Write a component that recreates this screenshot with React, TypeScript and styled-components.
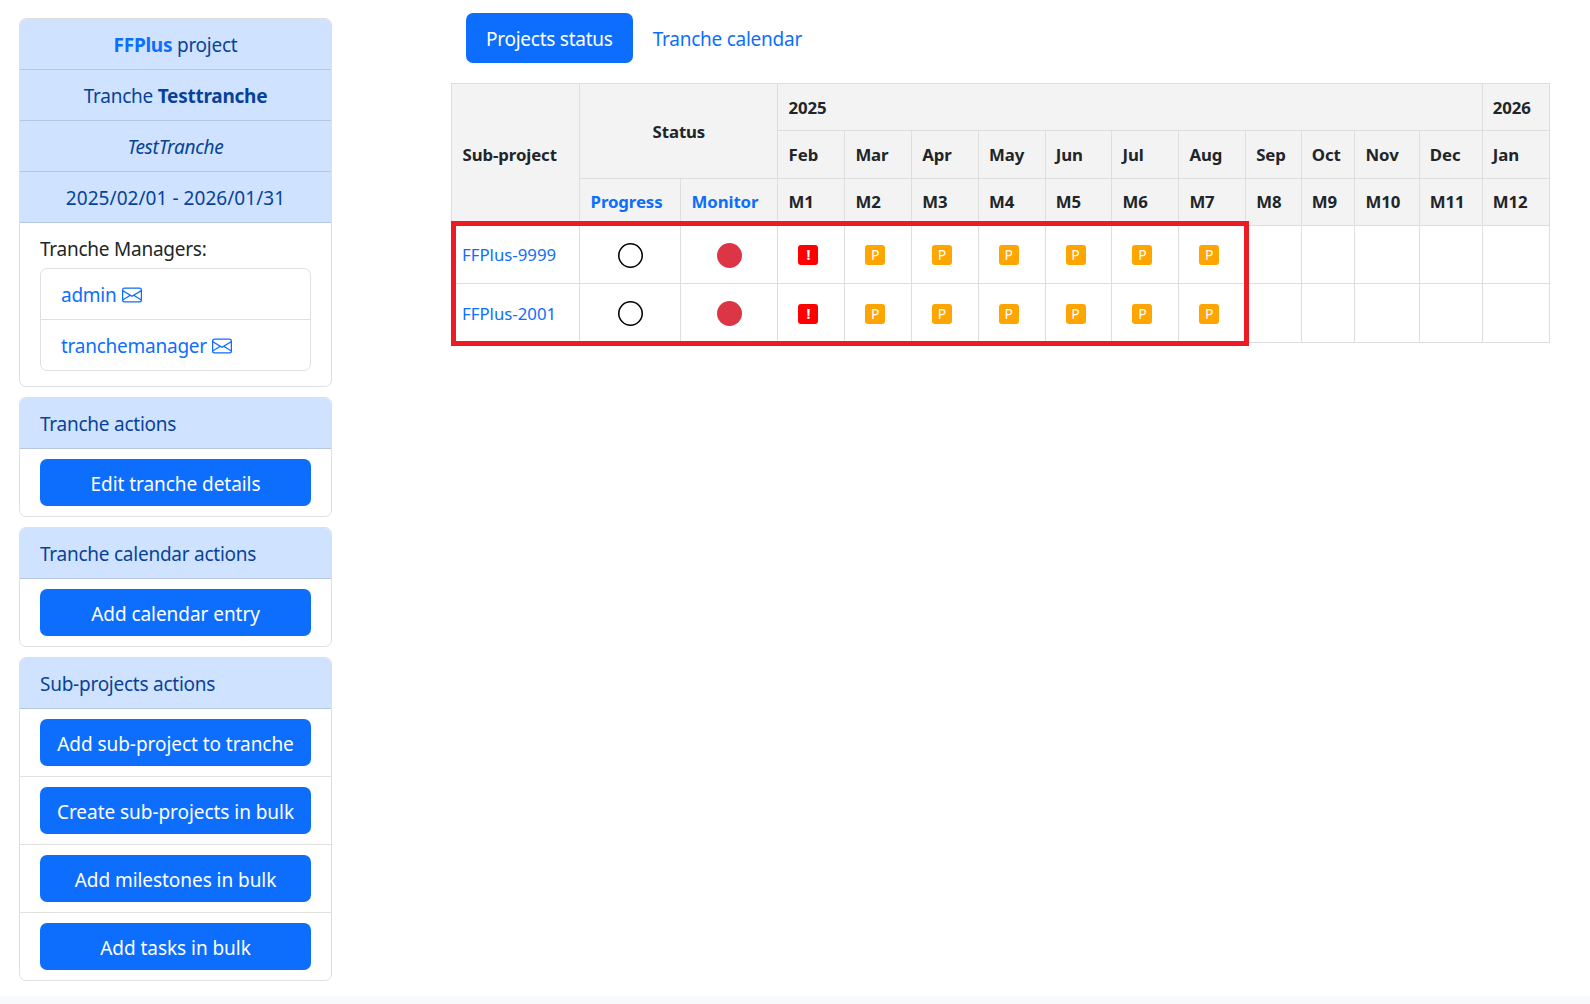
import React from 'react';
import styled, { createGlobalStyle } from 'styled-components';
import { BsCircle, BsCircleFill, BsEnvelope } from 'react-icons/bs';

const GlobalStyle = createGlobalStyle`
  * {
    box-sizing: border-box;
  }

  body {
    margin: 0;
    background: #fff;
    color: #212529;
    font-family: 'Noto Sans', 'Open Sans', sans-serif;
    font-size: 19px;
    line-height: 30px;
    letter-spacing: -0.25px;
  }

  a {
    color: #0d6efd;
    text-decoration: none;
  }
`;

const Page = styled.div`
  display: flex;
  flex-direction: column;
  height: 1004px;
  overflow: hidden;
`;

const Content = styled.div`
  flex: 1;
  display: flex;
  align-items: flex-start;
`;

const FooterStrip = styled.div`
  height: 8px;
  background: #f8f9fa;
`;

const Sidebar = styled.aside`
  width: 313px;
  margin: 18px 0 0 19px;
  display: flex;
  flex-direction: column;
  gap: 10.3px;
`;

const Card = styled.section`
  border: 1px solid #dfdfdf;
  border-radius: 7px;
  overflow: hidden;
  background: #fff;
`;

const HeadRow = styled.div<{ $centered?: boolean; $wide?: boolean }>`
  height: ${(p) => (p.$centered ? '51px' : '50.8px')};
  padding: 2px ${(p) => (p.$centered ? '10px' : '20px')} 0;
  display: flex;
  align-items: center;
  justify-content: ${(p) => (p.$centered ? 'center' : 'flex-start')};
  white-space: pre;
  background: #cfe2ff;
  color: #084298;
  border-bottom: 1px solid #b5c6df;
  letter-spacing: ${(p) => (p.$wide ? '0.05px' : 'inherit')};
`;

const ProjectName = styled.strong`
  color: #0d6efd;
  font-weight: 700;
`;

const ManagersBody = styled.div`
  padding: 11px 20px 15px;
`;

const ManagersLabel = styled.div`
  margin-bottom: 4px;
`;

const ManagersList = styled.ul`
  list-style: none;
  margin: 0;
  padding: 0;
  border: 1px solid #dfdfdf;
  border-radius: 7px;
`;

const ManagerItem = styled.li`
  height: 50.5px;
  padding: 2px 20px 0;
  display: flex;
  align-items: center;
  border-bottom: 1px solid #dfdfdf;

  &:last-child {
    border-bottom: 0;
  }
`;

const ManagerLink = styled.a`
  display: inline-flex;
  align-items: center;
  gap: 5px;
`;

const ActionRow = styled.div`
  padding: 10px 20px;
  border-bottom: 1px solid #dfdfdf;

  &:last-child {
    border-bottom: 0;
  }
`;

const ActionButton = styled.button`
  display: block;
  width: 100%;
  height: 47px;
  padding: 3px 0 0;
  border: 0;
  border-radius: 7px;
  background: #0d6efd;
  color: #fff;
  font: inherit;
  letter-spacing: -0.05px;
`;

const Main = styled.main`
  margin-left: 119.4px;
  padding-top: 13px;
`;

const Tabs = styled.nav`
  display: flex;
  height: 50px;
  margin: 0 0 20.3px 14.6px;
`;

const Tab = styled.a<{ $active?: boolean }>`
  display: flex;
  align-items: center;
  padding: 2px 20px 0;
  border-radius: 7px;
  color: ${(p) => (p.$active ? '#fff' : '#0d6efd')};
  background: ${(p) => (p.$active ? '#0d6efd' : 'transparent')};
`;

const TableWrap = styled.div`
  position: relative;
  width: 1098px;
`;

const StatusTable = styled.table`
  width: 1098px;
  table-layout: fixed;
  border-collapse: collapse;
  font-size: 16.8px;
  line-height: 26px;
  letter-spacing: -0.1px;

  thead tr:first-child th {
    padding-top: 1px;
  }

  thead tr:nth-child(2) th {
    height: 48px;
  }

  tbody tr:first-child td {
    height: 58px;
  }
`;

const Th = styled.th<{ $center?: boolean }>`
  height: 47px;
  padding: 0 10.2px;
  border: 1px solid #dedede;
  background: #f3f3f3;
  font-weight: 700;
  white-space: nowrap;
  text-align: ${(p) => (p.$center ? 'center' : 'left')};
`;

const Td = styled.td<{ $center?: boolean }>`
  height: 59px;
  padding: 1px 9.6px 0;
  border: 1px solid #dedede;
  letter-spacing: 0;
  text-align: ${(p) => (p.$center ? 'center' : 'left')};
`;

const IconCell = styled.span`
  display: flex;
  justify-content: center;
  align-items: center;
  font-size: 25px;
`;

const MilestoneBadge = styled.span<{ $late?: boolean }>`
  display: flex;
  align-items: center;
  justify-content: center;
  width: 20px;
  height: 20px;
  margin-left: 10.4px;
  border-radius: 3px;
  background: ${(p) => (p.$late ? '#ff0000' : '#ffa500')};
  color: #fff;
  font-size: 14px;
  font-weight: ${(p) => (p.$late ? 700 : 400)};
  line-height: 20px;
`;

const RedMark = styled.div`
  position: absolute;
  left: 0;
  top: 138px;
  width: 798px;
  height: 125px;
  border: 5px solid #ed1c24;
  pointer-events: none;
`;

const columnWidths = [128, 101, 97, 66.8, 66.8, 66.8, 66.8, 66.8, 66.8, 66.8, 55.7, 53.7, 64.3, 62.9, 67.8];
const months = ['Feb', 'Mar', 'Apr', 'May', 'Jun', 'Jul', 'Aug', 'Sep', 'Oct', 'Nov', 'Dec', 'Jan'];
const subProjects = ['FFPlus-9999', 'FFPlus-2001'];
const milestones = ['!', 'P', 'P', 'P', 'P', 'P', 'P', '', '', '', '', ''];
const subProjectActions = [
  'Add sub-project to tranche',
  'Create sub-projects in bulk',
  'Add milestones in bulk',
  'Add tasks in bulk',
];

const App = () => (
  <Page>
    <GlobalStyle />
    <Content>
      <Sidebar>
        <Card>
          <HeadRow $centered>
            <ProjectName>FFPlus</ProjectName> project
          </HeadRow>
          <HeadRow $centered>
            Tranche <strong>Testtranche</strong>
          </HeadRow>
          <HeadRow $centered>
            <em>TestTranche</em>
          </HeadRow>
          <HeadRow $centered $wide>2025/02/01 - 2026/01/31</HeadRow>
          <ManagersBody>
            <ManagersLabel>Tranche Managers:</ManagersLabel>
            <ManagersList>
              {['admin', 'tranchemanager'].map((name) => (
                <ManagerItem key={name}>
                  <ManagerLink href="#">
                    {name} <BsEnvelope size={20} />
                  </ManagerLink>
                </ManagerItem>
              ))}
            </ManagersList>
          </ManagersBody>
        </Card>

        <Card>
          <HeadRow>Tranche actions</HeadRow>
          <ActionRow>
            <ActionButton>Edit tranche details</ActionButton>
          </ActionRow>
        </Card>

        <Card>
          <HeadRow>Tranche calendar actions</HeadRow>
          <ActionRow>
            <ActionButton>Add calendar entry</ActionButton>
          </ActionRow>
        </Card>

        <Card>
          <HeadRow>Sub-projects actions</HeadRow>
          {subProjectActions.map((label) => (
            <ActionRow key={label}>
              <ActionButton>{label}</ActionButton>
            </ActionRow>
          ))}
        </Card>
      </Sidebar>

      <Main>
        <Tabs>
          <Tab $active href="#">Projects status</Tab>
          <Tab href="#">Tranche calendar</Tab>
        </Tabs>

        <TableWrap>
          <StatusTable>
            <colgroup>
              {columnWidths.map((width, i) => (
                <col key={i} style={{ width }} />
              ))}
            </colgroup>
            <thead>
              <tr>
                <Th rowSpan={3}>Sub-project</Th>
                <Th rowSpan={2} colSpan={2} $center>Status</Th>
                <Th colSpan={11}>2025</Th>
                <Th>2026</Th>
              </tr>
              <tr>
                {months.map((month) => (
                  <Th key={month}>{month}</Th>
                ))}
              </tr>
              <tr>
                <Th><a href="#">Progress</a></Th>
                <Th><a href="#">Monitor</a></Th>
                {months.map((_, i) => (
                  <Th key={i}>M{i + 1}</Th>
                ))}
              </tr>
            </thead>
            <tbody>
              {subProjects.map((name) => (
                <tr key={name}>
                  <Td><a href="#">{name}</a></Td>
                  <Td $center>
                    <IconCell><BsCircle color="#000" /></IconCell>
                  </Td>
                  <Td $center>
                    <IconCell><BsCircleFill color="#dc3545" /></IconCell>
                  </Td>
                  {milestones.map((mark, i) => (
                    <Td key={i}>
                      {mark && <MilestoneBadge $late={mark === '!'}>{mark}</MilestoneBadge>}
                    </Td>
                  ))}
                </tr>
              ))}
            </tbody>
          </StatusTable>
          <RedMark />
        </TableWrap>
      </Main>
    </Content>
    <FooterStrip />
  </Page>
);

export default App;
